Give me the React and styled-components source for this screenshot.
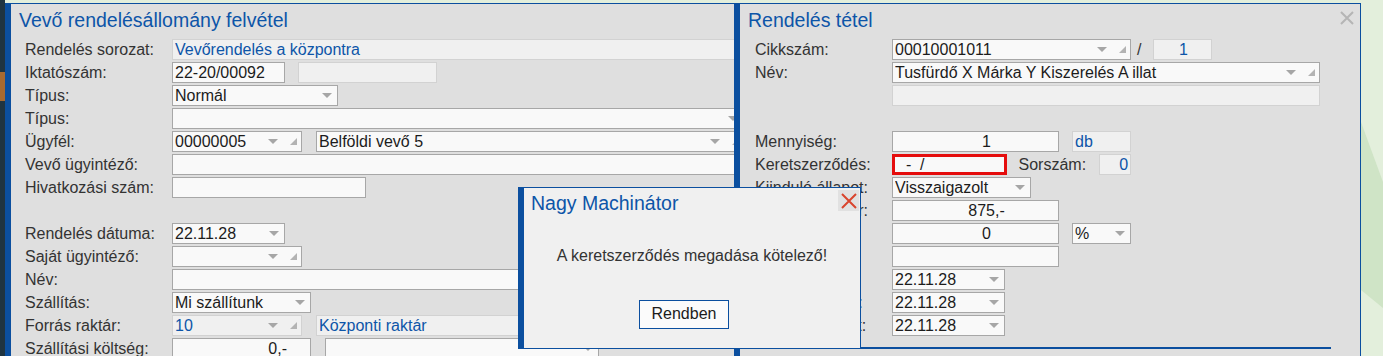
import React from 'react';
import styled, { createGlobalStyle } from 'styled-components';

const frame = '#0b4f9f';
const ink = '#0d55a8';

const GlobalStyle = createGlobalStyle`
  html, body {
    margin: 0;
    padding: 0;
  }
  body {
    font-family: "Liberation Sans", Arial, sans-serif;
    font-size: 16px;
    color: #333;
    background: #e3efdc;
  }
`;

const Desktop = styled.div`
  display: flex;
  width: 1383px;
  height: 356px;
  overflow: hidden;
`;

const Dock = styled.div`
  flex: none;
  width: 5px;
  box-sizing: border-box;
  padding-top: 72px;
  background: #1f3441;
`;

const DockMark = styled.div`
  height: 29px;
  background: #a86a30;
`;

const Workspace = styled.div`
  position: relative;
  flex: 1;
  background: #e3efdc;
  overflow: hidden;
`;

const Backdrop = styled.svg`
  position: absolute;
  right: 0;
  top: 0;
`;

const Window = styled.section`
  position: absolute;
  left: ${p => p.$x}px;
  top: ${p => p.$y}px;
  width: ${p => p.$w}px;
  height: ${p => p.$h}px;
  box-sizing: border-box;
  display: flex;
  flex-direction: column;
  background: ${p => (p.$dialog ? '#f0f0f0' : '#dfdfdf')};
  border-left: 6px solid ${frame};
  border-top: 1px solid ${frame};
  border-right: ${p => (p.$closed ? `1px solid ${frame}` : 'none')};
  border-bottom: ${p => (p.$dialog ? `1px solid ${frame}` : 'none')};
`;

const Header = styled.header`
  flex: none;
  display: flex;
  justify-content: space-between;
  align-items: flex-start;
  height: 35px;
  box-sizing: border-box;
  padding: 4.5px 6px 0 8px;
`;

const Title = styled.h1`
  margin: 0;
  font-size: 19.5px;
  font-weight: normal;
  line-height: 22px;
  color: ${ink};
`;

const CloseIcon = styled.div`
  margin-top: 2px;
`;

const Form = styled.div`
  display: flex;
  flex-direction: column;
  gap: 2px;
  padding: 0 ${p => p.$pr}px 0 ${p => p.$pl}px;
`;

const Row = styled.div`
  display: flex;
  align-items: center;
  height: 21px;
`;

const Label = styled.label`
  flex: none;
  width: ${p => p.$w}px;
  line-height: 21px;
  white-space: nowrap;
  color: #333;
`;

const InlineLabel = styled.span`
  flex: none;
  margin: 0 ${p => p.$mr}px 0 ${p => p.$ml}px;
  line-height: 21px;
  white-space: pre;
  color: #333;
`;

const Field = styled.div`
  box-sizing: border-box;
  height: 21px;
  flex: ${p => (p.$w ? 'none' : '1')};
  width: ${p => (p.$w ? `${p.$w}px` : 'auto')};
  min-width: 0;
  margin-left: ${p => p.$gap || 0}px;
  display: flex;
  align-items: center;
  padding-left: 2px;
  border: ${p =>
    p.$error ? '3px solid #e50d0d' : `1px solid ${p.$readOnly ? '#d2d2d2' : '#a7a7a7'}`};
  background: ${p => (p.$readOnly ? '#f0f0f0' : '#f9f9f9')};
  color: ${p => (p.$readOnly ? ink : '#1c1c1c')};
`;

const Value = styled.span`
  flex: 1;
  min-width: 0;
  overflow: hidden;
  white-space: pre;
  line-height: 19px;
  text-align: ${p => p.$align || 'left'};
  padding-left: ${p => p.$pl || 0}px;
  padding-right: ${p => p.$pr || 0}px;
`;

const Arrow = styled.span`
  flex: none;
  width: 0;
  height: 0;
  border-left: 5px solid transparent;
  border-right: 5px solid transparent;
  border-top: 5px solid #a6a6a6;
  margin-right: ${p => p.$mr}px;
`;

const Grip = styled.span`
  flex: none;
  width: 0;
  height: 0;
  border-left: 7px solid transparent;
  border-bottom: 7px solid #b3b3b3;
  margin-right: 4px;
`;

const Divider = styled.div`
  height: 2px;
  margin: 11px 29px 0 0;
  background: ${frame};
`;

const DialogHeader = styled.header`
  display: flex;
  justify-content: space-between;
  align-items: flex-start;
  padding: 2px 1px 0 7px;
`;

const DialogTitle = styled(Title)`
  margin-top: 2px;
`;

const CloseButton = styled.button`
  width: 21px;
  height: 21px;
  padding: 0;
  border: none;
  background: #e1e1e1;
  display: flex;
  align-items: center;
  justify-content: center;
`;

const Message = styled.p`
  margin: 33px 0 0;
  text-align: center;
  line-height: 18px;
  color: #333;
`;

const OkButton = styled.button`
  align-self: center;
  width: 90px;
  height: 29px;
  margin: 34.5px 16px 0 0;
  padding: 0;
  border: 1px solid ${frame};
  background: #fbfbfb;
  font-family: inherit;
  font-size: 16px;
  color: #1c1c1c;
`;

const Input = ({ w, gap, readOnly, error, align, pl, pr, children }) => (
  <Field $w={w} $gap={gap} $readOnly={readOnly} $error={error}>
    <Value $align={align} $pl={pl} $pr={pr}>
      {children}
    </Value>
  </Field>
);

const Select = ({ w, gap, readOnly, children }) => (
  <Field $w={w} $gap={gap} $readOnly={readOnly}>
    <Value>{children}</Value>
    <Arrow $mr={5} />
  </Field>
);

const Combo = ({ w, gap, readOnly, children }) => (
  <Field $w={w} $gap={gap} $readOnly={readOnly}>
    <Value>{children}</Value>
    <Arrow $mr={12} />
    <Grip />
  </Field>
);

const Cross = ({ size, inset, color, stroke }) => (
  <svg width={size} height={size} viewBox={`0 0 ${size} ${size}`}>
    <path
      d={`M${inset} ${inset}L${size - inset} ${size - inset}M${size - inset} ${inset}L${inset} ${size - inset}`}
      stroke={color}
      strokeWidth={stroke}
      fill="none"
    />
  </svg>
);

const LW = 147;
const RW = 137;

const OrderWindow = () => (
  <Window $x={0} $y={3} $w={747} $h={360}>
    <Header>
      <Title>Vevő rendelésállomány felvétel</Title>
    </Header>
    <Form $pl={14} $pr={8}>
      <Row>
        <Label $w={LW}>Rendelés sorozat:</Label>
        <Input readOnly>Vevőrendelés a központra</Input>
      </Row>
      <Row>
        <Label $w={LW}>Iktatószám:</Label>
        <Input w={113}>22-20/00092</Input>
        <Input w={139} gap={13} readOnly />
      </Row>
      <Row>
        <Label $w={LW}>Típus:</Label>
        <Select w={166}>Normál</Select>
      </Row>
      <Row>
        <Label $w={LW}>Típus:</Label>
        <Select />
      </Row>
      <Row>
        <Label $w={LW}>Ügyfél:</Label>
        <Combo w={130}>00000005</Combo>
        <Combo gap={14}>Belföldi vevő 5</Combo>
      </Row>
      <Row>
        <Label $w={LW}>Vevő ügyintéző:</Label>
        <Input />
      </Row>
      <Row>
        <Label $w={LW}>Hivatkozási szám:</Label>
        <Input w={194} />
      </Row>
      <Row />
      <Row>
        <Label $w={LW}>Rendelés dátuma:</Label>
        <Select w={113}>22.11.28</Select>
      </Row>
      <Row>
        <Label $w={LW}>Saját ügyintéző:</Label>
        <Combo w={130} />
      </Row>
      <Row>
        <Label $w={LW}>Név:</Label>
        <Input />
      </Row>
      <Row>
        <Label $w={LW}>Szállítás:</Label>
        <Select w={139}>Mi szállítunk</Select>
      </Row>
      <Row>
        <Label $w={LW}>Forrás raktár:</Label>
        <Combo w={130} readOnly>10</Combo>
        <Input gap={14} readOnly>Központi raktár</Input>
      </Row>
      <Row>
        <Label $w={LW}>Szállítási költség:</Label>
        <Input w={139} align="right" pr={23}>0,-</Input>
        <Select w={274} gap={14} />
      </Row>
    </Form>
  </Window>
);

const ItemWindow = () => (
  <Window $x={729} $y={3} $w={627} $h={360} $closed>
    <Header>
      <Title>Rendelés tétel</Title>
      <CloseIcon>
        <Cross size={14} inset={1} color="#b5b5b5" stroke={2} />
      </CloseIcon>
    </Header>
    <Form $pl={15} $pr={40}>
      <Row>
        <Label $w={RW}>Cikkszám:</Label>
        <Combo w={239}>00010001011</Combo>
        <InlineLabel $ml={6} $mr={11.5}>/</InlineLabel>
        <Input w={59} readOnly align="center">1</Input>
      </Row>
      <Row>
        <Label $w={RW}>Név:</Label>
        <Combo>Tusfürdő X Márka Y Kiszerelés A illat</Combo>
      </Row>
      <Row>
        <Label $w={RW} />
        <Input readOnly />
      </Row>
      <Row />
      <Row>
        <Label $w={RW}>Mennyiség:</Label>
        <Input w={167} align="center" pl={20}>1</Input>
        <Input w={59} gap={13} readOnly>db</Input>
      </Row>
      <Row>
        <Label $w={RW}>Keretszerződés:</Label>
        <Input w={115} error>{'  -  /'}</Input>
        <InlineLabel $ml={11.5} $mr={13}>Sorszám:</InlineLabel>
        <Input w={32} readOnly align="right" pr={2}>0</Input>
      </Row>
      <Row>
        <Label $w={RW}>Kiinduló állapot:</Label>
        <Select w={139}>Visszaigazolt</Select>
      </Row>
      <Row>
        <Label $w={RW}>Nettó egységár:</Label>
        <Input w={167} align="center" pl={20}>875,-</Input>
      </Row>
      <Row>
        <Label $w={RW}>Engedmény:</Label>
        <Input w={167} align="center" pl={20}>0</Input>
        <Select w={59} gap={13}>%</Select>
      </Row>
      <Row>
        <Label $w={RW} />
        <Input w={167} />
      </Row>
      <Row>
        <Label $w={RW}>Határidő:</Label>
        <Select w={113}>22.11.28</Select>
      </Row>
      <Row>
        <Label $w={RW}>Kért kiszállítás:</Label>
        <Select w={113}>22.11.28</Select>
      </Row>
      <Row>
        <Label $w={RW}>Átadás időpont:</Label>
        <Select w={113}>22.11.28</Select>
      </Row>
    </Form>
    <Divider />
  </Window>
);

const AlertDialog = () => (
  <Window $x={513} $y={187} $w={343} $h={162} $closed $dialog>
    <DialogHeader>
      <DialogTitle>Nagy Machinátor</DialogTitle>
      <CloseButton type="button" aria-label="Bezárás">
        <Cross size={16} inset={1} color="#d9452e" stroke={2} />
      </CloseButton>
    </DialogHeader>
    <Message>A keretszerződés megadása kötelező!</Message>
    <OkButton type="button">Rendben</OkButton>
  </Window>
);

export default function App() {
  return (
    <>
      <GlobalStyle />
      <Desktop>
        <Dock>
          <DockMark />
        </Dock>
        <Workspace>
          <Backdrop width="22" height="356" viewBox="1361 0 22 356">
            <polygon points="1361,122 1383,182 1383,308 1361,290" fill="#cfe4c6" />
          </Backdrop>
          <OrderWindow />
          <ItemWindow />
          <AlertDialog />
        </Workspace>
      </Desktop>
    </>
  );
}
